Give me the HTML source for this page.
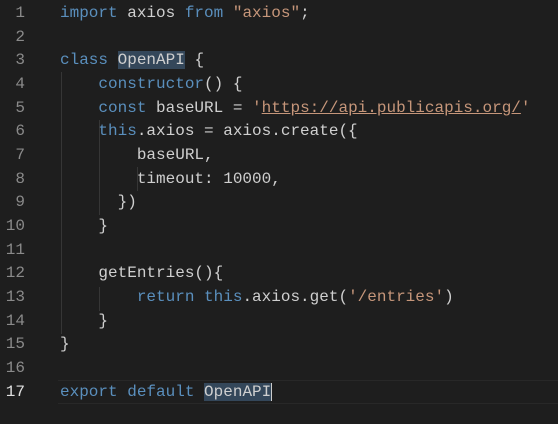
<html><head><style>
body{margin:0;background:#1e1e1e;width:558px;height:424px;overflow:hidden;position:relative;font-family:"Liberation Mono",monospace;font-size:16px;}
.l{position:absolute;left:0;height:24px;line-height:24px;white-space:pre;color:#cfcfcf}
.n{position:absolute;left:0;width:25px;text-align:right;color:#8a8a8a}
.c{position:absolute;left:60px}
.k{color:#5a8fbd}.s{color:#c6967a}.u{text-decoration:underline}
.h{background:#34475a}
.g{position:absolute;width:1px;background:#363636}
</style></head><body>
<div class="g" style="left:61px;top:72px;height:262px"></div>
<div class="g" style="left:99px;top:120px;height:95px"></div>
<div class="g" style="left:99px;top:287px;height:24px"></div>
<div class="g" style="left:137px;top:167px;height:24px"></div>
<div style="position:absolute;left:58px;top:380px;width:500px;height:24px;border-top:1px solid #282828;border-bottom:1px solid #282828;box-sizing:border-box"></div>
<div class="l" style="top:1px"><span class="n">1</span><span class="c"><span class="k">import</span> axios <span class="k">from</span> <span class="s">"axios"</span>;</span></div>
<div class="l" style="top:25px"><span class="n">2</span></div>
<div class="l" style="top:48px"><span class="n">3</span><span class="c"><span class="k">class</span> <span class="h">OpenAPI</span> {</span></div>
<div class="l" style="top:72px"><span class="n">4</span><span class="c">    <span class="k">constructor</span>() {</span></div>
<div class="l" style="top:96px"><span class="n">5</span><span class="c">    <span class="k">const</span> baseURL = <span class="s">'<span class="u">https://api.publicapis.org/</span>'</span></span></div>
<div class="l" style="top:119px"><span class="n">6</span><span class="c">    <span class="k">this</span>.axios = axios.create({</span></div>
<div class="l" style="top:143px"><span class="n">7</span><span class="c">        baseURL,</span></div>
<div class="l" style="top:167px"><span class="n">8</span><span class="c">        timeout: 10000,</span></div>
<div class="l" style="top:190px"><span class="n">9</span><span class="c">      })</span></div>
<div class="l" style="top:214px"><span class="n">10</span><span class="c">    }</span></div>
<div class="l" style="top:238px"><span class="n">11</span></div>
<div class="l" style="top:261px"><span class="n">12</span><span class="c">    getEntries(){</span></div>
<div class="l" style="top:285px"><span class="n">13</span><span class="c">        <span class="k">return</span> <span class="k">this</span>.axios.get(<span class="s">'/entries'</span>)</span></div>
<div class="l" style="top:309px"><span class="n">14</span><span class="c">    }</span></div>
<div class="l" style="top:332px"><span class="n">15</span><span class="c">}</span></div>
<div class="l" style="top:356px"><span class="n">16</span></div>
<div class="l" style="top:380px"><span class="n" style="color:#e0e0e0">17</span><span class="c"><span class="k">export</span> <span class="k">default</span> <span class="h" style="border-right:1px solid #ccc">OpenAPI</span></span></div>
</body></html>
